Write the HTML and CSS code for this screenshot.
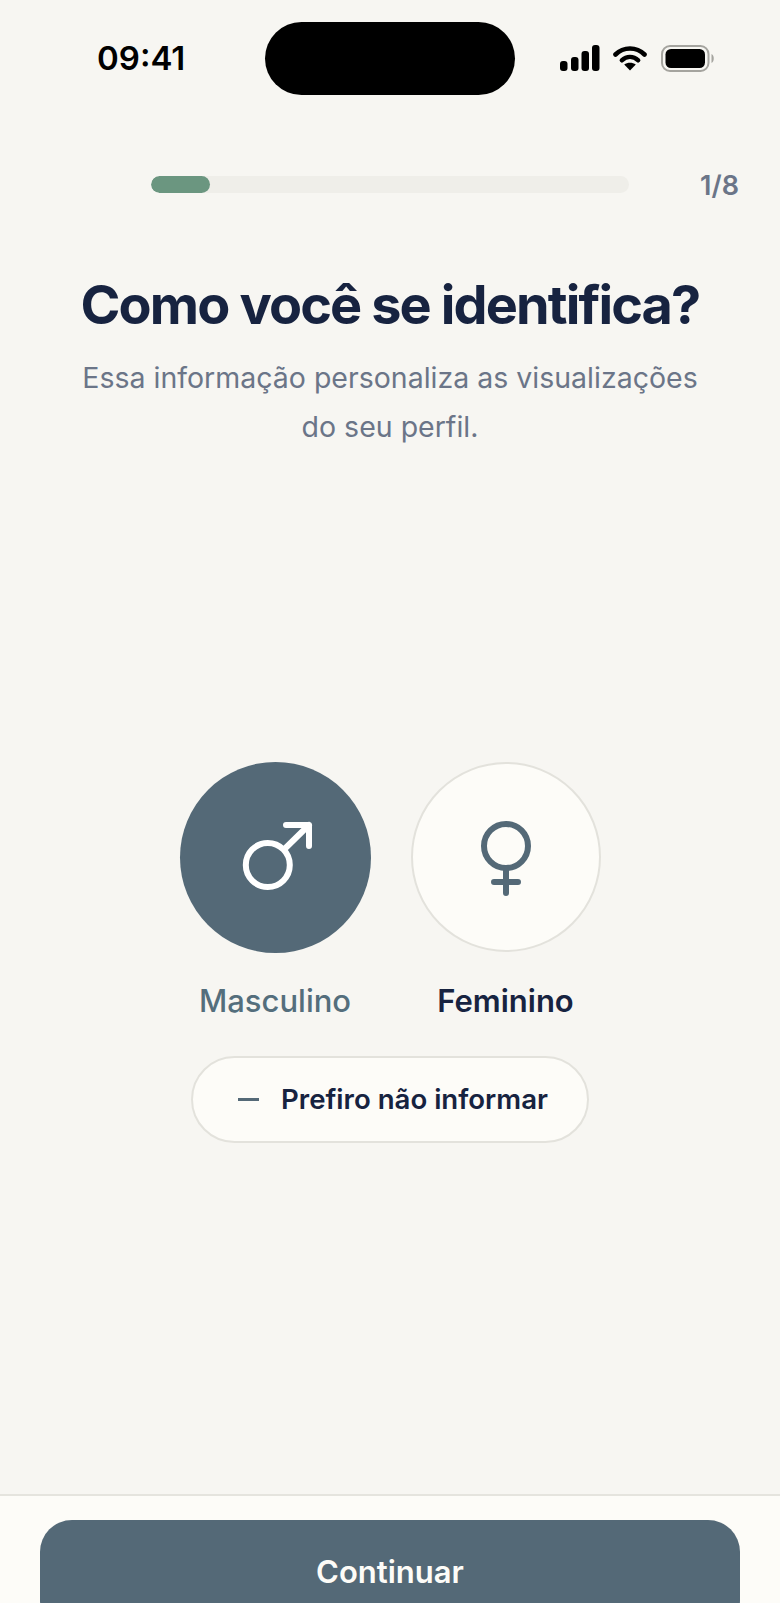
FILE: index.html
```html
<!DOCTYPE html>
<html lang="pt-BR">
<head>
<meta charset="utf-8">
<title>Como você se identifica?</title>
<link rel="stylesheet" href="styles.css">
</head>
<body>
<div class="screen">
  <header class="status">
    <span class="time">09:41</span>
    <div class="island"></div>
    <div class="status-icons">
      <svg class="ic-signal" width="40" height="26" viewBox="0 0 40 26"><rect x="0" y="16" width="7.5" height="10" rx="3" /><rect x="11" y="12" width="7.5" height="14" rx="3"/><rect x="21.5" y="6" width="7.5" height="20" rx="3"/><rect x="32" y="0" width="7.5" height="26" rx="3"/></svg>
      <svg class="ic-wifi" width="34" height="26" viewBox="0 0 34 26"><path d="M2.5 9.5C10.5 1.5 23.5 1.5 31.5 9.5" fill="none" stroke="#000" stroke-width="4.6" stroke-linecap="round"/><path d="M8.8 15.3C13.6 10.7 20.4 10.7 25.2 15.3" fill="none" stroke="#000" stroke-width="4.4" stroke-linecap="round"/><path d="M17 25.5L11.2 19.6C14.6 17 19.4 17 22.8 19.6Z"/></svg>
      <svg class="ic-battery" width="55" height="27" viewBox="0 0 55 27"><rect x="1" y="1" width="46.5" height="25" rx="8" fill="none" stroke="#a5a49f" stroke-width="2"/><rect x="4.5" y="4" width="39.5" height="19" rx="5.5"/><path d="M50.5 9C53.5 10 53.5 17 50.5 18Z" fill="#a5a49f"/></svg>
    </div>
  </header>

  <div class="progress-row">
    <div class="track"><div class="fill"></div></div>
    <span class="step">1/8</span>
  </div>

  <section class="intro">
    <h1 class="title">Como você se identifica?</h1>
    <p class="subtitle">Essa informação personaliza as visualizações<br>do seu perfil.</p>
  </section>

  <section class="choices">
    <div class="gender-row">
      <div class="gender">
        <div class="circle circle-on">
          <svg width="80" height="80" viewBox="0 0 80 80" fill="none" stroke="#fff" stroke-width="6" stroke-linecap="round" stroke-linejoin="round"><circle cx="32.8" cy="47" r="22"/><path d="M49.5 31L74 7M51 7H74V28"/></svg>
        </div>
        <span class="label label-on">Masculino</span>
      </div>
      <div class="gender">
        <div class="circle circle-off">
          <svg width="80" height="80" viewBox="0 0 80 80" fill="none" stroke="#546977" stroke-width="6" stroke-linecap="round" stroke-linejoin="round"><circle cx="40" cy="29" r="22"/><path d="M40 51V76M28 65H52"/></svg>
        </div>
        <span class="label label-off">Feminino</span>
      </div>
    </div>
    <button class="skip" type="button"><span class="dash"></span>Prefiro não informar</button>
  </section>

  <footer class="footer">
    <button class="cta" type="button">Continuar</button>
  </footer>
</div>
</body>
</html>
```
FILE: styles.css
```css
* { box-sizing: border-box; }
html, body { margin: 0; padding: 0; }
body { background: #f7f6f2; font-family: Inter, "Liberation Sans", sans-serif; }
.screen { width: 780px; height: 1603px; overflow: hidden; display: flex; flex-direction: column; background: #f7f6f2; }

.status { height: 73px; margin-top: 22px; display: grid; grid-template-columns: 265px 250px 1fr; align-items: center; }
.time { padding-left: 97px; font-size: 33px; font-weight: 600; color: #000; line-height: 1; }
.island { width: 250px; height: 73px; background: #000; border-radius: 36.5px; }
.status-icons { display: flex; align-items: center; gap: 13px; padding-left: 45px; height: 26px; margin-top: -1px; }
.ic-wifi { margin-right: 1px; }

.progress-row { margin-top: 81px; display: flex; align-items: center; height: 17px; padding-left: 151px; }
.track { width: 478px; height: 17px; background: #efeee9; border-radius: 8.5px; overflow: hidden; }
.fill { width: 59px; height: 17px; background: #6b9680; border-radius: 8.5px; }
.step { margin-left: 71px; font-size: 27px; line-height: 36px; font-weight: 600; color: #6b7588; padding-top: 2px; }

.intro { margin-top: 81px; text-align: center; }
.title { margin: 0; font-size: 54px; line-height: 62px; font-weight: 700; letter-spacing: -1.88px; color: #172340; }
.subtitle { margin: 18px 0 0; font-size: 28.5px; line-height: 48.5px; font-weight: 400; color: #6b7588; }

.choices { margin-top: 311px; display: flex; flex-direction: column; align-items: center; }
.gender-row { display: flex; gap: 40px; }
.gender { display: flex; flex-direction: column; align-items: center; gap: 30px; }
.circle { width: 191px; height: 191px; border-radius: 50%; display: flex; align-items: center; justify-content: center; }
.circle-on { background: #546977; }
.circle-off { width: 190px; height: 190px; margin-bottom: 1px; background: #fdfcf8; border: 2px solid #e3e2dc; }
.label { font-size: 31px; line-height: 36px; }
.label-on { font-weight: 500; color: #546e7c; }
.label-off { font-weight: 600; color: #172340; }

.skip { margin-top: 37px; width: 398px; height: 87px; border-radius: 43.5px; background: #fdfcf8; border: 2px solid #e3e2dc; display: flex; align-items: center; justify-content: center; gap: 22px; font-family: inherit; font-size: 27.6px; font-weight: 600; color: #172340; padding: 0 0 2px 6px; }
.dash { width: 21px; height: 2.5px; background: #546977; margin-top: 2px; }

.footer { margin-top: auto; flex: none; height: 109px; background: #fdfcf8; border-top: 2px solid #e5e4de; padding: 24px 40px 0; }
.cta { display: block; width: 700px; height: 112px; border: 0; border-radius: 32px; background: #546977; color: #fdfcf8; font-family: inherit; font-size: 31px; font-weight: 600; padding: 0 0 10px; }
```
